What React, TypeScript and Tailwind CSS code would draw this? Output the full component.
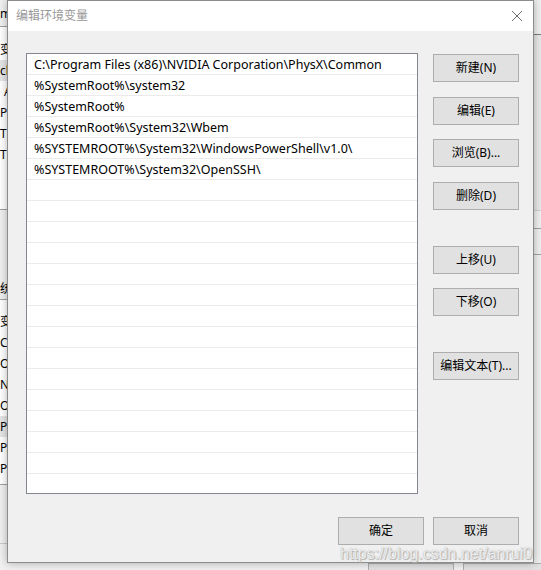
import React from 'react';

const paths = [
  'C:\\Program Files (x86)\\NVIDIA Corporation\\PhysX\\Common',
  '%SystemRoot%\\system32',
  '%SystemRoot%',
  '%SystemRoot%\\System32\\Wbem',
  '%SYSTEMROOT%\\System32\\WindowsPowerShell\\v1.0\\',
  '%SYSTEMROOT%\\System32\\OpenSSH\\',
];

function Btn({ label, className = '' }: { label: string; className?: string }) {
  return (
    <button className={`w-[86px] h-[28px] bg-[#e1e1e1] border border-[#adadad] text-[12px] text-black flex items-center justify-center ${className}`}>
      {label}
    </button>
  );
}

function BackWindow() {
  return (
    <div className="absolute inset-0 flex justify-between">
      <div className="w-[30px] flex flex-col text-[12px] text-black overflow-hidden">
        <div className="h-[27px] flex items-end pb-[3px] border-b border-[#a0a0a0]">m</div>
        <div className="h-[183px] bg-white flex flex-col pt-[12px] border-b border-[#a0a0a0]">
          <div className="h-[21px] leading-[21px]">变</div>
          <div className="h-[21px] leading-[21px] bg-[#e5e5e5]">cla</div>
          <div className="h-[21px] leading-[21px] pl-[4px]">A</div>
          <div className="h-[21px] leading-[21px]">Pa</div>
          <div className="h-[21px] leading-[21px]">TE</div>
          <div className="h-[21px] leading-[21px]">TM</div>
        </div>
        <div className="h-[90px] flex items-end pb-[1px] border-b border-[#a0a0a0]">统</div>
        <div className="h-[185px] bg-white flex flex-col pt-[11px] border-b border-[#a0a0a0]">
          <div className="h-[21px] leading-[21px]">变</div>
          <div className="h-[21px] leading-[21px]">Co</div>
          <div className="h-[21px] leading-[21px]">Or</div>
          <div className="h-[21px] leading-[21px]">NI</div>
          <div className="h-[21px] leading-[21px]">OS</div>
          <div className="h-[21px] leading-[21px] bg-[#e5e5e5]">Pa</div>
          <div className="h-[21px] leading-[21px]">PA</div>
          <div className="h-[21px] leading-[21px]">PR</div>
        </div>
        <div className="h-[59px] border-b border-[#c8c8c8]" />
      </div>
      <div className="w-[10px] flex flex-col">
        <div className="h-[35px] border-b border-[#7a7a7a]" />
        <div className="h-[176px] border-l border-[#d0d0d0] bg-[#e8e8e8] border-b border-[#7a7a7a]" />
        <div className="h-[18px] border-b border-[#a0a0a0]" />
        <div className="h-[26px] border-b border-[#a0a0a0]" />
        <div className="flex-1 border-l border-[#d0d0d0]" />
      </div>
      <div className="absolute left-[368px] top-[563px] w-[86px] h-[20px] bg-[#e1e1e1] border border-[#adadad]" />
      <div className="absolute left-[463px] top-[563px] w-[86px] h-[20px] bg-[#e1e1e1] border border-[#adadad]" />
    </div>
  );
}

export default function App() {
  return (
    <div
      className="relative w-[541px] h-[570px] overflow-hidden bg-[#f0f0f0]"
      style={{ fontFamily: '"Noto Sans", "Noto Sans CJK SC", sans-serif' }}
    >
      <BackWindow />

      <div className="absolute left-[7px] top-0 w-[527px] h-[563px] flex flex-col bg-[#f0f0f0] border border-[#8c8c8c] shadow-[0_0_8px_rgba(0,0,0,0.3)]">
        <div className="h-[30px] bg-white flex items-center justify-between pl-[8px] pr-[10px] shrink-0">
          <span className="text-[12px] text-[#999999]">编辑环境变量</span>
          <svg width="12" height="12" viewBox="0 0 12 12" className="text-[#6b6b6b]">
            <path d="M1 1 L11 11 M11 1 L1 11" stroke="currentColor" strokeWidth="1" fill="none" />
          </svg>
        </div>

        <div className="flex-1 flex flex-col pl-[18px] pr-[14px] pt-[22px]">
          <div className="flex">
            <div className="w-[392px] h-[441px] bg-white border border-[#828790] overflow-hidden">
              {Array.from({ length: 21 }).map((_, i) => (
                <div
                  key={i}
                  className="h-[21px] border-b border-[#ebebeb] pl-[7px] text-[12.5px] leading-[21px] text-black whitespace-nowrap"
                >
                  {paths[i] ?? ''}
                </div>
              ))}
            </div>
            <div className="ml-[15px] mt-[1px] flex flex-col">
              <Btn label="新建(N)" />
              <Btn label="编辑(E)" className="mt-[15px]" />
              <Btn label="浏览(B)..." className="mt-[14px]" />
              <Btn label="删除(D)" className="mt-[15px]" />
              <Btn label="上移(U)" className="mt-[36px]" />
              <Btn label="下移(O)" className="mt-[14px]" />
              <Btn label="编辑文本(T)..." className="mt-[36px]" />
            </div>
          </div>
          <div className="flex justify-end gap-[9px] mt-[23px]">
            <Btn label="确定" />
            <Btn label="取消" />
          </div>
        </div>
      </div>

      <div
        className="absolute left-[340px] top-[542px] text-[16px] text-white/80 whitespace-nowrap pointer-events-none"
        style={{ fontFamily: '"Liberation Sans", Arial, sans-serif', textShadow: '0 0 1px #9a9a9a, 1px 1px 1px #b0b0b0' }}
      >
        https://blog.csdn.net/anrui0
      </div>
    </div>
  );
}
